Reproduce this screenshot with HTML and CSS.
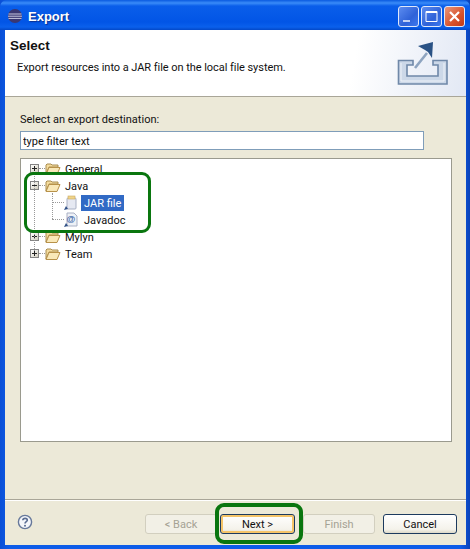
FILE: index.html

```html
<!DOCTYPE html>
<html lang="en">
<head>
  <meta charset="UTF-8">
  <title>Export</title>
  <link rel="stylesheet" href="styles.css">
</head>
<body>
<div class="window">
  <div class="titlebar">
    <svg class="app-icon" width="16" height="16" viewBox="0 0 16 16">
      <circle cx="8" cy="8" r="7" fill="#3a3772"/>
      <path d="M1.5 6h13M1 8.2h14M1.5 10.4h13" stroke="#d9d9ec" stroke-width=".9"/>
    </svg>
    <span class="title">Export</span>
    <div class="win-buttons">
      <span class="win-btn"><svg width="21" height="21" viewBox="0 0 21 21"><path d="M5 15h7" stroke="#fff" stroke-width="2" opacity=".7"/></svg></span>
      <span class="win-btn"><svg width="21" height="21" viewBox="0 0 21 21"><path d="M5 5.5h11v10H5z" fill="none" stroke="#fff"/><path d="M5 6h11" stroke="#fff" stroke-width="2"/></svg></span>
      <span class="win-btn close"><svg width="21" height="21" viewBox="0 0 21 21"><path d="M6 6l9 9M15 6l-9 9" stroke="#fff" stroke-width="2.2"/></svg></span>
    </div>
  </div>

  <div class="header">
    <div class="header-text">
      <h1>Select</h1>
      <p>Export resources into a JAR file on the local file system.</p>
    </div>
    <svg class="header-icon" width="52" height="44" viewBox="0 0 52 44">
      <path d="M1.5 19.5H16V24H10V35H41V24H36V19.5H50V43H1.500z" fill="#ccd8e8" stroke="#6f88a8" stroke-width="1.6"/>
      <path d="M4 22V40H47V22" fill="none" stroke="#eef2f8"/>
      <path d="M18 27L30 12" stroke="#8ea4c0" stroke-width="2.6"/>
      <path d="M21 5L36 1 35 17 31 11 28 9z" fill="#2a5285"/>
    </svg>
  </div>

  <div class="body">
    <label class="field-label" for="filter">Select an export destination:</label>
    <input class="filter" id="filter" type="text" value="type filter text">
    <div class="tree">
      <div class="guide guide-root"></div>
      <div class="guide guide-java"></div>

      <div class="row">
        <span class="twisty"><svg width="7" height="7"><path d="M1 3.500h5M3.500 1v5" stroke="#222"/></svg></span><span class="dash"></span>
        <svg class="folder" width="16" height="14"><use href="#folder"/></svg>
        <span class="label">General</span>
      </div>
      <div class="row">
        <span class="twisty"><svg width="7" height="7"><path d="M1 3.500h5" stroke="#222"/></svg></span><span class="dash"></span>
        <svg class="folder" width="16" height="14"><use href="#folder"/></svg>
        <span class="label">Java</span>
      </div>
      <div class="row child">
        <span class="dash long"></span>
        <svg class="file" width="14" height="16" viewBox="0 0 14 16">
          <rect x="3" y="3" width="9" height="11" rx="1" fill="#e6e9f2" stroke="#a9b0c4"/>
          <rect x="4" y="1" width="7" height="3" fill="#f0d48a" stroke="#c9a860" stroke-width=".6"/>
          <path d="M0 15l4-1-2-3z" fill="#2f4f85"/>
        </svg>
        <span class="label selected">JAR file</span>
      </div>
      <div class="row child">
        <span class="dash long"></span>
        <svg class="file" width="14" height="16" viewBox="0 0 14 16">
          <path d="M3 1h7l3 3v10H3z" fill="#eef1f6" stroke="#a9b0c4"/>
          <text class="at-sign" x="2.500" y="10">@</text>
          <path d="M0 15l4-1-2-3z" fill="#2f4f85"/>
        </svg>
        <span class="label">Javadoc</span>
      </div>
      <div class="row">
        <span class="twisty"><svg width="7" height="7"><path d="M1 3.500h5M3.500 1v5" stroke="#222"/></svg></span><span class="dash"></span>
        <svg class="folder" width="16" height="14"><use href="#folder"/></svg>
        <span class="label">Mylyn</span>
      </div>
      <div class="row">
        <span class="twisty"><svg width="7" height="7"><path d="M1 3.500h5M3.500 1v5" stroke="#222"/></svg></span><span class="dash"></span>
        <svg class="folder" width="16" height="14"><use href="#folder"/></svg>
        <span class="label">Team</span>
      </div>
    </div>
  </div>

  <div class="footer">
    <svg class="help" width="16" height="16" viewBox="0 0 16 16">
      <circle cx="8" cy="8" r="6.6" fill="#f4f6fa" stroke="#66789a" stroke-width="1.4"/>
      <path d="M5.8 6.2C6 3.8 10.3 3.800 10.3 6.2 10.3 7.8 8 7.6 8 9.6" fill="none" stroke="#5a6d92" stroke-width="1.6"/>
      <circle cx="8" cy="11.7" r="1" fill="#5a6d92"/>
    </svg>
    <div class="buttons">
      <button class="btn" disabled>&lt; Back</button>
      <button class="btn default">Next &gt;</button>
      <button class="btn finish" disabled>Finish</button>
      <button class="btn cancel">Cancel</button>
    </div>
  </div>

  <div class="callout callout-tree"></div>
  <div class="callout callout-next"></div>
</div>

<svg width="0" height="0" class="defs">
  <symbol id="folder" viewBox="0 0 16 14">
    <path d="M1 12V3l1-1h4l1 1h6v2H4z" fill="#f5dc9c" stroke="#a88c50"/>
    <path d="M1 12.5L4 5.5h11l-3 7z" fill="#f9e8b8" stroke="#b8924a"/>
  </symbol>
</svg>
</body>
</html>
```

FILE: styles.css

```css
* {
  box-sizing: border-box;
}

html, body {
  margin: 0;
  height: 100%;
}

body {
  font-family: Roboto, sans-serif;
  font-size: 11px;
  color: #111;
  background: #0a50d8;
}

.window {
  position: relative;
  height: 549px;
  display: flex;
  flex-direction: column;
  padding: 0 4px 4px 5px;
  background: linear-gradient(90deg, #0a4fd6, #0d5ce8 2%, #0d5ce8 98%, #0a42b8);
  overflow: hidden;
}

.defs {
  position: absolute;
}

.titlebar {
  height: 30px;
  margin: 0 -4px 0 -5px;
  padding: 2px 5px 0 7px;
  display: flex;
  align-items: center;
  border-radius: 7px 7px 0 0;
  background: linear-gradient(180deg, #0a5ae0 0, #3a8cf8 3px, #0a5eea 6px, #0255e6 22px, #0a60ec 27px, #0348c8 30px);
}

.app-icon {
  margin-right: 5px;
}

.title {
  color: #fff;
  font-family: "Liberation Sans", sans-serif;
  font-weight: bold;
  font-size: 13px;
  text-shadow: 1px 1px 1px #0a2f90;
}

.win-buttons {
  margin-left: auto;
  display: flex;
  gap: 2px;
}

.win-btn {
  width: 21px;
  height: 21px;
  border: 1px solid #dfe8fa;
  border-radius: 3px;
  background: linear-gradient(135deg, #5c8cf0, #2f62d8 60%, #3c78ee);
  overflow: hidden;
  display: flex;
  align-items: center;
  justify-content: center;
  flex: none;
}

.win-btn svg {
  flex: none;
}

.win-btn.close {
  background: linear-gradient(135deg, #e8967a, #d8532c 60%, #c23a18);
}

.header {
  height: 67px;
  flex: none;
  padding: 8px 17px 0 5px;
  display: flex;
  justify-content: space-between;
  background: linear-gradient(100deg, #fff 75%, #e2e8f4);
  border-bottom: 1px solid #a9a698;
}

h1 {
  margin: 0;
  font-family: "Liberation Sans", sans-serif;
  font-size: 13.5px;
  font-weight: bold;
  line-height: 16px;
}

.header-text p {
  margin: 6px 0 0 7px;
  line-height: 15px;
  letter-spacing: -.05px;
}

.header-icon {
  margin: 3px 0 0;
}

.body {
  flex: 1;
  padding: 15px 14px 0 15px;
  background: #ece9d8;
  display: flex;
  flex-direction: column;
}

.field-label {
  line-height: 16px;
}

.filter {
  width: 404px;
  height: 19px;
  margin-top: 3px;
  padding: 1px 2px 0;
  border: 1px solid #7f9db9;
  font: inherit;
  color: #111;
  background: #fff;
}

.tree {
  position: relative;
  width: 432px;
  height: 284px;
  margin-top: 8px;
  padding-top: 1px;
  background: #fff;
  border: 1px solid #9a9a8e;
  overflow: hidden;
}

.row {
  height: 17px;
  display: flex;
  align-items: center;
  padding-left: 9px;
}

.row.child {
  padding-left: 31px;
}

.twisty {
  width: 9px;
  height: 9px;
  flex: none;
  display: flex;
  border: 1px solid #848484;
  background: linear-gradient(135deg, #fff, #d4d0c0);
}

.dash {
  width: 6px;
  flex: none;
  border-top: 1px dotted #999;
}

.dash.long {
  width: 12px;
}

.guide {
  position: absolute;
  border-left: 1px dotted #999;
}

.guide-root {
  left: 13px;
  top: 14px;
  height: 78px;
}

.guide-java {
  left: 31px;
  top: 34px;
  height: 26px;
}

.folder {
  flex: none;
  margin-right: 2px;
}

.file {
  flex: none;
  margin-right: 3px;
}

.at-sign {
  font: bold 9px "Liberation Sans", sans-serif;
  fill: #3f68a8;
}

.label {
  line-height: 15px;
  padding: 1px 3px 0 2px;
}

.row.child .label {
  padding: 1px 3px 0;
}

.selected {
  background: #316ac5;
  color: #fff;
}

.footer {
  height: 46px;
  flex: none;
  padding: 14px 0 0 12px;
  display: flex;
  justify-content: space-between;
  background: #ece9d8;
  border-top: 1px solid #a9a698;
  box-shadow: inset 0 1px 0 #fff;
}

.buttons {
  display: flex;
  padding-right: 9px;
}

.btn {
  width: 72px;
  height: 20px;
  padding: 0;
  font: inherit;
  color: #111;
  border: 1px solid #1c3a5e;
  border-radius: 3px;
  background: linear-gradient(180deg, #fff, #f4f2ea 80%, #dcd8c8);
}

.btn:disabled {
  color: #a5a294;
  border-color: #d2cfbf;
  background: #f2f0e6;
}

.btn.default {
  width: 75px;
  margin-left: 3px;
  box-shadow: inset 0 0 0 2px #f5c468;
}

.btn.finish {
  margin-left: 8px;
}

.btn.cancel {
  width: 74px;
  margin-left: 8px;
}

/* green annotation rings drawn over the dialog */
.callout {
  position: absolute;
  border: 3px solid #0a760f;
  border-radius: 9px;
  pointer-events: none;
}

.callout-tree {
  left: 24px;
  top: 172px;
  width: 127px;
  height: 61px;
}

.callout-next {
  left: 215px;
  top: 503px;
  width: 88px;
  height: 41px;
  border-width: 4px;
}
```
